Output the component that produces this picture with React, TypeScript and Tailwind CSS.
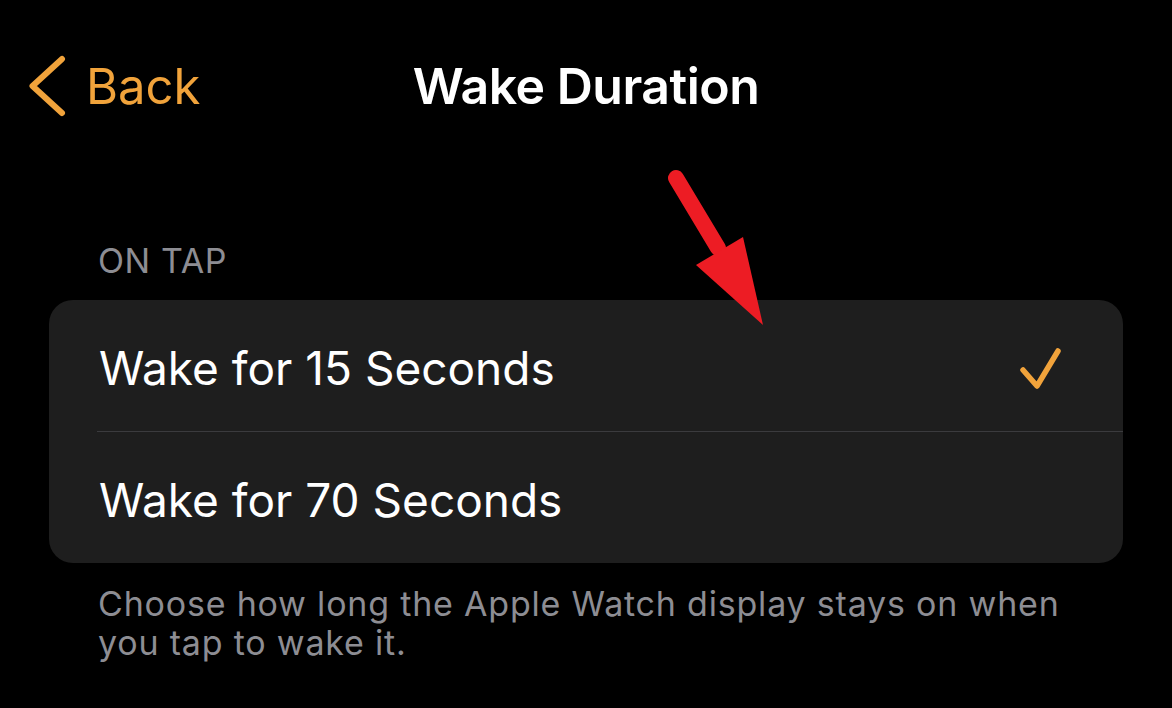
import React from 'react'

const font = { fontFamily: 'Inter, "Noto Sans", sans-serif' }

function Chevron() {
  return (
    <svg width="40" height="62" viewBox="0 0 40 62" fill="none">
      <polyline points="36,4 6.5,31 36,58" stroke="#f1a33b" strokeWidth="6" strokeLinecap="round" strokeLinejoin="round" />
    </svg>
  )
}

function Check() {
  return (
    <svg width="48" height="48" viewBox="0 0 48 48" fill="none">
      <polyline points="7,26 21,42 42,7" stroke="#f1a33b" strokeWidth="5.5" strokeLinecap="round" strokeLinejoin="round" />
    </svg>
  )
}

function Arrow() {
  return (
    <svg className="absolute left-0 top-0 pointer-events-none" width="1172" height="708" viewBox="0 0 1172 708">
      <line x1="676" y1="178" x2="718" y2="248" stroke="#ed1c24" strokeWidth="16" strokeLinecap="round" />
      <polygon points="696,265 743,237 763,325" fill="#ed1c24" />
    </svg>
  )
}

export default function App() {
  const options = [
    { label: 'Wake for 15 Seconds', selected: true },
    { label: 'Wake for 70 Seconds', selected: false },
  ]

  return (
    <div className="relative w-[1172px] h-[708px] bg-black text-white overflow-hidden" style={font}>
      {/* Nav bar */}
      <div className="relative h-[172px] flex items-center pl-[26px]">
        <div className="flex items-center gap-[20px]">
          <Chevron />
          <span className="text-[49px] leading-none text-[#f1a33b]">Back</span>
        </div>
        <div className="absolute inset-0 flex items-center justify-center">
          <span className="text-[50px] leading-none font-semibold tracking-[-0.5px]">Wake Duration</span>
        </div>
      </div>

      <div className="px-[49px] pt-[69px]">
        <div className="pl-[49px] text-[34px] leading-[40px] text-[#8d8d93] tracking-[0.6px]">ON TAP</div>

        <div className="mt-[19px] rounded-[24px] bg-[#1e1e1e] overflow-hidden">
          {options.map((opt, i) => (
            <div key={opt.label}>
              {i > 0 && <div className="ml-[48px] h-px bg-[#3b3b3e]" />}
              <div className="h-[131px] flex items-center justify-between pl-[50px] pr-[59px] pt-[5px]">
                <span className="text-[46px] leading-none">{opt.label}</span>
                {opt.selected && <Check />}
              </div>
            </div>
          ))}
        </div>

        <p className="mt-[21px] pl-[49px] pr-[20px] text-[34px] leading-[39px] text-[#8d8d93] tracking-[0.8px]">
          Choose how long the Apple Watch display stays on when you tap to wake it.
        </p>
      </div>

      <Arrow />
    </div>
  )
}
